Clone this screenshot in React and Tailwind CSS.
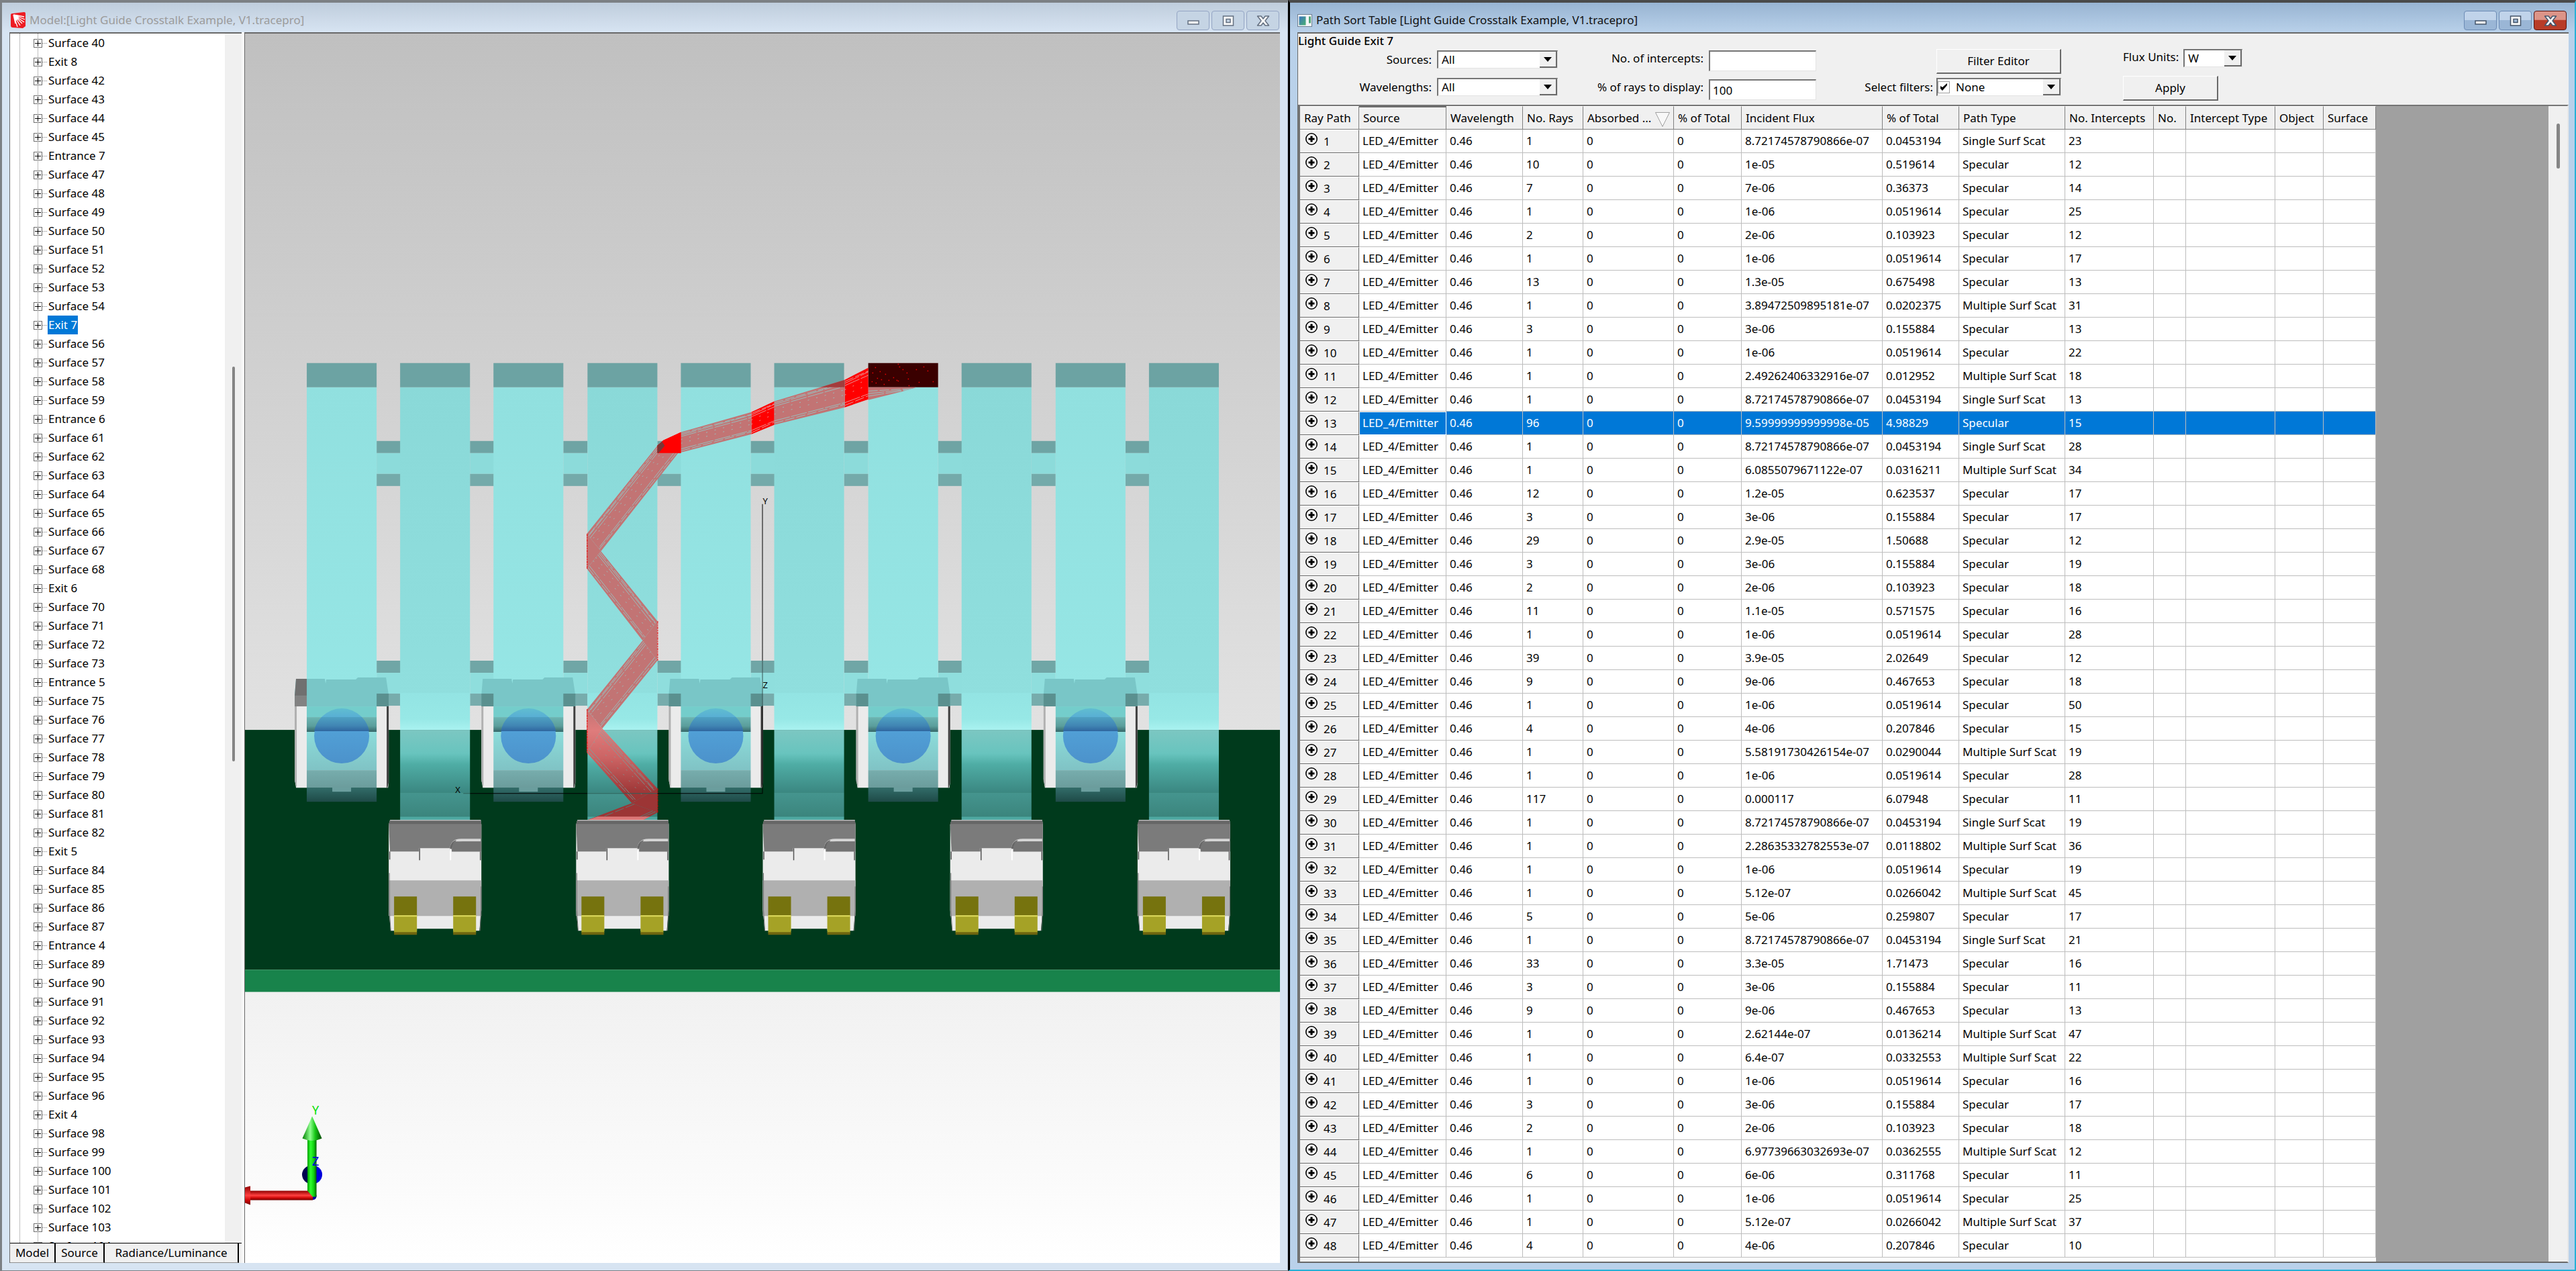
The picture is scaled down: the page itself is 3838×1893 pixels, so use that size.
import React, { useState } from 'react';

const TREE_LABELS = {
    41: 'Exit 8', 46: 'Entrance 7', 55: 'Exit 7', 60: 'Entrance 6', 69: 'Exit 6',
    74: 'Entrance 5', 83: 'Exit 5', 88: 'Entrance 4', 97: 'Exit 4',
};
const TREE = Array.from({ length: 65 }, (_, i) => TREE_LABELS[i + 40] || `Surface ${i + 40}`);

const TYPES = { s: 'Specular', 1: 'Single Surf Scat', m: 'Multiple Surf Scat' };

// rays, incident flux, % of total, path type, intercepts
const ROWS = [
    [1, '8.72174578790866e-07', '0.0453194', '1', 23],
    [10, '1e-05', '0.519614', 's', 12],
    [7, '7e-06', '0.36373', 's', 14],
    [1, '1e-06', '0.0519614', 's', 25],
    [2, '2e-06', '0.103923', 's', 12],
    [1, '1e-06', '0.0519614', 's', 17],
    [13, '1.3e-05', '0.675498', 's', 13],
    [1, '3.89472509895181e-07', '0.0202375', 'm', 31],
    [3, '3e-06', '0.155884', 's', 13],
    [1, '1e-06', '0.0519614', 's', 22],
    [1, '2.49262406332916e-07', '0.012952', 'm', 18],
    [1, '8.72174578790866e-07', '0.0453194', '1', 13],
    [96, '9.59999999999998e-05', '4.98829', 's', 15],
    [1, '8.72174578790866e-07', '0.0453194', '1', 28],
    [1, '6.0855079671122e-07', '0.0316211', 'm', 34],
    [12, '1.2e-05', '0.623537', 's', 17],
    [3, '3e-06', '0.155884', 's', 17],
    [29, '2.9e-05', '1.50688', 's', 12],
    [3, '3e-06', '0.155884', 's', 19],
    [2, '2e-06', '0.103923', 's', 18],
    [11, '1.1e-05', '0.571575', 's', 16],
    [1, '1e-06', '0.0519614', 's', 28],
    [39, '3.9e-05', '2.02649', 's', 12],
    [9, '9e-06', '0.467653', 's', 18],
    [1, '1e-06', '0.0519614', 's', 50],
    [4, '4e-06', '0.207846', 's', 15],
    [1, '5.58191730426154e-07', '0.0290044', 'm', 19],
    [1, '1e-06', '0.0519614', 's', 28],
    [117, '0.000117', '6.07948', 's', 11],
    [1, '8.72174578790866e-07', '0.0453194', '1', 19],
    [1, '2.28635332782553e-07', '0.0118802', 'm', 36],
    [1, '1e-06', '0.0519614', 's', 19],
    [1, '5.12e-07', '0.0266042', 'm', 45],
    [5, '5e-06', '0.259807', 's', 17],
    [1, '8.72174578790866e-07', '0.0453194', '1', 21],
    [33, '3.3e-05', '1.71473', 's', 16],
    [3, '3e-06', '0.155884', 's', 11],
    [9, '9e-06', '0.467653', 's', 13],
    [1, '2.62144e-07', '0.0136214', 'm', 47],
    [1, '6.4e-07', '0.0332553', 'm', 22],
    [1, '1e-06', '0.0519614', 's', 16],
    [3, '3e-06', '0.155884', 's', 17],
    [2, '2e-06', '0.103923', 's', 18],
    [1, '6.97739663032693e-07', '0.0362555', 'm', 12],
    [6, '6e-06', '0.311768', 's', 11],
    [1, '1e-06', '0.0519614', 's', 25],
    [1, '5.12e-07', '0.0266042', 'm', 37],
    [4, '4e-06', '0.207846', 's', 10],
];

const COLUMNS = [
    ['Ray Path', 'w-[88px]'],
    ['Source', 'w-[130px]'],
    ['Wavelength', 'w-[114px]'],
    ['No. Rays', 'w-[90px]'],
    ['Absorbed ...', 'w-[135px]'],
    ['% of Total', 'w-[101px]'],
    ['Incident Flux', 'w-[210px]'],
    ['% of Total', 'w-[114px]'],
    ['Path Type', 'w-[158px]'],
    ['No. Intercepts', 'w-[132px]'],
    ['No.', 'w-[48px]'],
    ['Intercept Type', 'w-[133px]'],
    ['Object', 'w-[72px]'],
    ['Surface', 'w-[78px]'],
];

function WindowButtons({ active }) {
    const base = active
        ? 'border-[#6c8bb5] bg-linear-to-b from-[#c0d3ea] from-50% to-[#9ab6d6] to-50%'
        : 'border-[#94a5c4] bg-[#c5d4e4]';
    const close = active ? 'border-[#5a1410] bg-linear-to-b from-[#dc9488] from-45% to-[#b83c28] to-50%' : base;
    const ink = active ? '#44546a' : '#636f80';
    return (
        <div className="flex gap-[3px] pt-3">
            <button aria-label="Minimize" className={`flex h-[29px] w-[49px] items-center justify-center rounded-sm border ${base}`}>
                <svg width="20" height="20" viewBox="0 0 20 20">
                    <rect x="2" y="10" width="16" height="5" fill="#f8f8f8" stroke={ink} strokeWidth="1.5" />
                </svg>
            </button>
            <button aria-label="Maximize" className={`flex h-[29px] w-[49px] items-center justify-center rounded-sm border ${base}`}>
                <svg width="20" height="20" viewBox="0 0 20 20">
                    <path d="M2.500 3h15v14h-15zM7 7.500h6v5H7z" fill="#f8f8f8" fillRule="evenodd" stroke={ink} strokeWidth="1.5" />
                </svg>
            </button>
            <button aria-label="Close" className={`flex h-[29px] w-[49px] items-center justify-center rounded-sm border ${close}`}>
                <svg width="20" height="20" viewBox="0 0 20 20">
                    <path
                        d="M1.500 3h5.500l3 4 3-4h5.500l-5.500 7 5.500 7h-5.500l-3-4-3 4H1.500L7 10z"
                        fill="#f8f8f8"
                        stroke={ink}
                        strokeWidth="1.5"
                        strokeLinejoin="round"
                    />
                </svg>
            </button>
        </div>
    );
}

function TreeNode({ label, selected, onSelect }) {
    return (
        <li className="flex h-7 items-center">
            <svg width="56" height="28" viewBox="0 0 56 28" className="shrink-0" shapeRendering="crispEdges">
                <path d="M14.500 0V28M41.500 0V28" stroke="#808080" strokeDasharray="1 1" />
                <path d="M48 14.500h7" stroke="#808080" strokeDasharray="1 1" />
                <rect x="35.500" y="8.500" width="12" height="12" fill="#fff" stroke="#707070" />
                <path d="M37 14.500h9M41.500 10v9" stroke="#000" />
            </svg>
            <button
                onClick={onSelect}
                className={`h-7 px-px text-left whitespace-nowrap ${selected ? 'bg-[#0078d7] text-white' : 'text-black'}`}
            >
                {label}
            </button>
        </li>
    );
}

function ModelTree() {
    const [selected, setSelected] = useState('Exit 7');
    const [tab, setTab] = useState('Model');
    const tabs = [['Model', 'w-[68px]'], ['Source', 'w-[73px]'], ['Radiance/Luminance', 'flex-1']];
    return (
        <div className="flex min-h-0 w-[345px] shrink-0 flex-col bg-[#f0f0f0]">
            <div className="flex min-h-0 flex-1 overflow-hidden">
                <ul className="min-w-0 flex-1 bg-white">
                    {TREE.map((label) => (
                        <TreeNode key={label} label={label} selected={label === selected} onSelect={() => setSelected(label)} />
                    ))}
                </ul>
                <div className="flex w-[25px] justify-center pt-[496px]">
                    <div className="h-[588px] w-1 rounded bg-[#858585]" />
                </div>
            </div>
            <div className="flex h-[30px] shrink-0 border-t border-black pr-1" role="tablist">
                {tabs.map(([name, width]) => (
                    <button
                        key={name}
                        role="tab"
                        aria-selected={tab === name}
                        onClick={() => setTab(name)}
                        className={`border-r-2 border-b border-r-black border-b-[#909090] text-center whitespace-nowrap ${width}`}
                    >
                        {name}
                    </button>
                ))}
            </div>
        </div>
    );
}

const BARS = [457, 596, 735, 875, 1014, 1153, 1293, 1432, 1572, 1711];
const LINE_STEPS = [0.06, 0.13, 0.21, 0.36, 0.55, 0.83, 0.93];

// Four corners: a→b is one outer edge of the bundle, d→c the other.
function RayBand({ a, b, c, d, fill, line = '#8bdad9', steps = LINE_STEPS }) {
    const mix = (p, q, t) => [p[0] + (q[0] - p[0]) * t, p[1] + (q[1] - p[1]) * t];
    return (
        <g>
            <polygon points={[a, b, c, d].map((p) => p.join()).join(' ')} fill={fill} />
            {steps.map((t, i) => {
                const p = mix(a, d, t);
                const q = mix(b, c, i % 2 ? t : t * 0.9 + 0.05);
                return (
                    <line
                        key={t}
                        x1={p[0]}
                        y1={p[1]}
                        x2={q[0]}
                        y2={q[1]}
                        stroke={line}
                        strokeWidth="0.7"
                        strokeDasharray={i === 3 || i === 4 ? '2 11' : i % 3 ? '24 2' : '14 3'}
                    />
                );
            })}
        </g>
    );
}

function RearModule({ x, first }) {
    return (
        <g transform={`translate(${x} 0)`}>
            <path d="M-18 1052H122V1165L121 1173H-16L-18 1160z" fill="#ebebeb" />
            <path d="M-18 1052h3v121l-3-10z" fill="#b0b0b0" />
            <path d="M119 1052h3v113l-2 8h-1z" fill="#3f3f3f" />
            <path
                d="M-16 1011H27L28 1018L29 1012H73L76 1009H118L122 1036V1052H-18V1035z"
                fill="#79c6c7"
            />
            {first && (
                <>
                    <path d="M-16 1011H0V1036H-18z" fill="#707070" />
                    <path d="M-18 1036H0V1052H-18z" fill="#828282" />
                </>
            )}
            {!first && <rect x="-18" y="1033" width="18" height="19" fill="#5a908f" />}
            <rect x="104" y="1033" width="18" height="19" fill="#5a908f" />
            <rect x="0" y="1052" width="104" height="16" fill="#74cdcb" />
            <rect x="0" y="1068" width="104" height="22" fill="url(#lip)" />
            <rect x="0" y="1090" width="104" height="57" fill="url(#window)" />
            <circle cx="52" cy="1096" r="41" fill="url(#emitter)" />
            <path d="M11 1089A41 41 0 0 1 22 1068H82A41 41 0 0 1 93 1089z" fill="url(#emitterLip)" />
            <rect x="0" y="1147" width="104" height="26" fill="url(#foot)" />
            <rect x="0" y="1173" width="104" height="21" fill="url(#sole)" />
            <rect x="38" y="1172" width="28" height="7" fill="#6b9e9e" />
        </g>
    );
}

function FrontModule({ x }) {
    return (
        <g transform={`translate(${x} 0)`}>
            <path d="M2 1221H137L138 1228V1355L135 1386H3L0 1355V1228z" fill="#ebebeb" />
            <path d="M2 1221H137L138 1228V1268H2L0 1228z" fill="#7b7b7b" />
            <path d="M2 1221H137L138 1227H0z" fill="#666" />
            <path d="M2 1221.500H137" stroke="#dcdcdc" />
            <path d="M45 1263H94V1281H45z" fill="#ebebeb" />
            <path d="M91 1266C91 1255 96 1249 108 1249H137V1253H110C99 1254 97 1258 94 1266z" fill="#d6d6d6" />
            <path d="M91 1266C91 1257 95 1252 101 1251C97 1255 95 1259 94 1264z" fill="#666" />
            <path d="M94 1262L97 1253H137V1268H94z" fill="#747474" />
            <path d="M46 1263v18M1.500 1268v12M136.500 1268v13" stroke="#555" strokeWidth="1.500" />
            <path d="M92 1264v17" stroke="#fff" strokeWidth="2" />
            <rect x="0" y="1311" width="138" height="53" fill="#b0b0b0" />
            <path d="M1 1300V1355L3 1386M137.500 1320V1355L136 1386" fill="none" stroke="#6d6d6d" />
            <path d="M42 1383H96V1387H42z" fill="#003a1c" />
            {[8, 96].map((px) => (
                <g key={px}>
                    <rect x={px} y="1335" width="34" height="28" fill="#76730e" />
                    <rect x={px} y="1363" width="34" height="26" fill="#a5a226" />
                    <rect x={px} y="1363" width="34" height="2" fill="#dedb5c" />
                    <rect x={px} y="1388" width="34" height="4" fill="#6e640f" />
                </g>
            ))}
        </g>
    );
}

const SPARKS = [
    [1337, 542], [1339, 546], [1344, 550], [1364, 550], [1381, 552], [1303, 547], [1310, 553], [1318, 557],
    [1306, 563], [1312, 565], [1323, 566], [1335, 566], [1352, 564], [1368, 569], [1389, 568], [1304, 570],
    [1316, 572], [1353, 574], [1375, 546], [1298, 568], [1330, 562], [1350, 555], [1299, 555], [1337, 567],
];

function LightGuideModel() {
    return (
        <svg
            viewBox="365 50 1541 1831"
            preserveAspectRatio="xMidYMid slice"
            className="h-full w-full"
            fontFamily="'Noto Sans', 'Open Sans', sans-serif"
            role="img"
            aria-label="Light guide model with traced rays"
        >
            <defs>
                <linearGradient id="sky" x2="0" y2="1">
                    <stop offset="0" stopColor="#c0c0c0" />
                    <stop offset="0.27" stopColor="#d0d0d0" />
                    <stop offset="0.56" stopColor="#e1e1e1" />
                    <stop offset="0.78" stopColor="#f1f1f1" />
                    <stop offset="1" stopColor="#ffffff" />
                </linearGradient>
                <linearGradient id="guideLight" x2="0" y2="1">
                    <stop offset="0" stopColor="#91e0df" />
                    <stop offset="1" stopColor="#96e6e5" />
                </linearGradient>
                <linearGradient id="guideDark" x2="0" y2="1">
                    <stop offset="0" stopColor="#8ad9d8" />
                    <stop offset="1" stopColor="#90dfde" />
                </linearGradient>
                <linearGradient id="glow" x2="0" y2="1">
                    <stop offset="0" stopColor="#93e4e3" />
                    <stop offset="0.7" stopColor="#97e8e6" />
                    <stop offset="1" stopColor="#a9f2f0" />
                </linearGradient>
                <linearGradient id="bend" x2="0" y2="1">
                    <stop offset="0" stopColor="#7cc7c2" />
                    <stop offset="0.38" stopColor="#68c4be" />
                    <stop offset="0.55" stopColor="#4fada5" />
                    <stop offset="1" stopColor="#3b8781" />
                </linearGradient>
                <linearGradient id="stem" x2="0" y2="1">
                    <stop offset="0" stopColor="#45958f" />
                    <stop offset="1" stopColor="#3b857d" />
                </linearGradient>
                <linearGradient id="lip" x2="0" y2="1">
                    <stop offset="0" stopColor="#6cb5b2" />
                    <stop offset="0.6" stopColor="#5b9e9c" />
                    <stop offset="1" stopColor="#356668" />
                </linearGradient>
                <linearGradient id="window" x2="0" y2="1">
                    <stop offset="0" stopColor="#8cdcda" />
                    <stop offset="1" stopColor="#80c3c5" />
                </linearGradient>
                <linearGradient id="emitter" x2="0" y2="1">
                    <stop offset="0" stopColor="#60bdd0" />
                    <stop offset="0.3" stopColor="#52a2d8" />
                    <stop offset="1" stopColor="#4c92cb" />
                </linearGradient>
                <linearGradient id="emitterLip" x2="0" y2="1">
                    <stop offset="0" stopColor="#4ea0c2" />
                    <stop offset="0.6" stopColor="#4186b4" />
                    <stop offset="1" stopColor="#2f669f" />
                </linearGradient>
                <linearGradient id="foot" x2="0" y2="1">
                    <stop offset="0" stopColor="#77adad" />
                    <stop offset="1" stopColor="#6b9c9c" />
                </linearGradient>
                <linearGradient id="sole" x2="0" y2="1">
                    <stop offset="0" stopColor="#326c69" />
                    <stop offset="1" stopColor="#1e4a47" />
                </linearGradient>
                <linearGradient id="rayFade" gradientUnits="userSpaceOnUse" x1="0" y1="1056" x2="0" y2="1200">
                    <stop offset="0" stopColor="#c27474" />
                    <stop offset="0.22" stopColor="#df7c7c" />
                    <stop offset="0.5" stopColor="#cc6464" />
                    <stop offset="0.85" stopColor="#9f3838" />
                    <stop offset="1" stopColor="#9a3434" />
                </linearGradient>
                <linearGradient id="shaftY">
                    <stop offset="0" stopColor="#00a000" />
                    <stop offset="0.35" stopColor="#30ff30" />
                    <stop offset="0.7" stopColor="#10d010" />
                    <stop offset="1" stopColor="#006000" />
                </linearGradient>
                <linearGradient id="coneY">
                    <stop offset="0" stopColor="#008000" />
                    <stop offset="0.4" stopColor="#90ff90" />
                    <stop offset="0.65" stopColor="#18c818" />
                    <stop offset="1" stopColor="#004800" />
                </linearGradient>
                <linearGradient id="shaftX" x2="0" y2="1">
                    <stop offset="0" stopColor="#900000" />
                    <stop offset="0.5" stopColor="#ff4040" />
                    <stop offset="0.75" stopColor="#d00808" />
                    <stop offset="1" stopColor="#700000" />
                </linearGradient>
            </defs>

            <rect x="365" y="50" width="1541" height="1831" fill="url(#sky)" />
            <rect x="365" y="1087" width="1541" height="357" fill="#003a1c" />
            <rect x="365" y="1444" width="1541" height="33" fill="#18834b" />

            {/* bridges between neighbouring guides */}
            {BARS.slice(0, -1).map((x) => (
                <g key={x}>
                    <rect x={x + 104} y="657" width="36" height="18" fill="#6ea4a4" />
                    <rect x={x + 104} y="675" width="36" height="31" fill="#8cdbda" />
                    <rect x={x + 104} y="706" width="36" height="18" fill="#74aaaa" />
                    <rect x={x + 104} y="984" width="36" height="18" fill="#70a6a6" />
                    <rect x={x + 104} y="1002" width="36" height="31" fill="#8fdedd" />
                    <rect x={x + 104} y="1033" width="36" height="18" fill="#77acac" />
                </g>
            ))}

            {BARS.map((x, i) => (
                <g key={x}>
                    <rect x={x} y="577" width="104" height="475" fill={i % 2 ? 'url(#guideDark)' : 'url(#guideLight)'} />
                    <rect x={x} y="541" width="104" height="36" fill={i === 6 ? '#3a0000' : '#6ca3a3'} />
                    {i % 2 === 1 && (
                        <>
                            <rect x={x} y="1032" width="104" height="55" fill="url(#glow)" />
                            <rect x={x} y="1087" width="104" height="93" fill="url(#bend)" />
                            <rect x={x} y="1180" width="104" height="36" fill="url(#stem)" />
                            <rect x={x} y="1216" width="104" height="5" fill="#4fa8a2" />
                        </>
                    )}
                </g>
            ))}
            {BARS.filter((_, i) => i % 2 === 0).map((x, i) => (
                <RearModule key={x} x={x} first={i === 0} />
            ))}

            {/* traced ray bundle */}
            <RayBand a={[1293, 577]} b={[1365, 577]} c={[1345, 583]} d={[1293, 596]} fill="#c27474" steps={[0.3, 0.5, 0.7]} />
            <RayBand a={[1258, 566]} b={[1293, 548]} c={[1293, 595]} d={[1258, 607]} fill="#f00" line="#e0d0d0" />
            <RayBand a={[1153, 598]} b={[1258, 566]} c={[1258, 607]} d={[1153, 633]} fill="#c27474" />
            <polygon points="1222,577 1258,566 1258,577" fill="#a33c3c" />
            <RayBand a={[1119, 614]} b={[1153, 598]} c={[1153, 633]} d={[1119, 647]} fill="#f00" line="#e0d0d0" />
            <RayBand a={[1014, 644]} b={[1119, 614]} c={[1119, 647]} d={[1014, 674]} fill="#c27474" />
            <polygon points="979,664 988,656 1014,644 1014,675 979,675" fill="#f00" />
            <polygon points="979,664 986,658 990,664 981,675 979,675" fill="#7c3434" />
            <RayBand a={[979, 664]} b={[874, 795]} c={[895, 821]} d={[1010, 675]} fill="#c27474" />
            <polygon points="979,664 988,656 1014,644 1014,675 979,675" fill="#f00" />
            <polygon points="979,664 986,658 990,664 981,675 979,675" fill="#7c3434" />
            <polygon points="874,795 895,821 874,847" fill="#c27474" />
            <RayBand a={[895, 821]} b={[979, 925]} c={[957, 954]} d={[874, 847]} fill="#c27474" />
            <polygon points="979,925 957,954 979,984" fill="#c27474" />
            <RayBand a={[957, 954]} b={[874, 1057]} c={[897, 1085]} d={[979, 984]} fill="#c27474" />
            <polygon points="874,1057 897,1085 874,1121" fill="url(#rayFade)" />
            <RayBand a={[897, 1085]} b={[979, 1174]} c={[941, 1196]} d={[874, 1121]} fill="url(#rayFade)" line="#66b0ac" />
            <polygon points="979,1174 941,1196 979,1210" fill="#9c3535" />
            <RayBand a={[941, 1196]} b={[875, 1221]} c={[958, 1221]} d={[979, 1210]} fill="#9c3535" line="#47908a" steps={[0.1, 0.82, 0.92]} />
            <polygon points="890,1216 968,1216 958,1221 875,1221" fill="#dc7777" />
            <path
                d="M874.500 795V847M979.500 925V984M874.500 1056V1121M979.500 1174V1210"
                stroke="#f00000"
                strokeDasharray="4 1 2 1"
            />
            {SPARKS.map(([x, y]) => (
                <rect key={`${x}-${y}`} x={x} y={y} width="1.500" height="1.500" fill="#f00000" />
            ))}

            {BARS.filter((_, i) => i % 2 === 1).map((x) => (
                <FrontModule key={x} x={x - 17} />
            ))}

            {/* model axes */}
            <path d="M1135.500 751V984M1135.500 1051V1181" stroke="#000" />
            <path d="M1135.500 984V1051" stroke="#375353" />
            <path d="M700 1181.500H875M979 1181.500H1136" stroke="#000" />
            <path d="M690 1181.500H700M875 1181.500H979" stroke="#2d5f5a" />
            <g fontSize="13" fill="#000">
                <text x="1136" y="751">Y</text>
                <text x="1136" y="1025">Z</text>
                <text x="678" y="1181">X</text>
            </g>

            {/* orientation triad */}
            <path d="M465 1735A15 14 0 0 0 465 1763z" fill="#000050" />
            <path d="M465 1735A15 14 0 0 1 465 1763z" fill="#0000dc" />
            <circle cx="466" cy="1781" r="5.500" fill="#0000a0" />
            <path d="M373 1773H458L466 1780V1787H373z" fill="url(#shaftX)" />
            <path d="M365 1768L373 1766V1794L365 1791z" fill="url(#shaftX)" />
            <path d="M458 1696H471.500V1782H466L458 1773z" fill="url(#shaftY)" />
            <path d="M465 1662L479.500 1695Q465 1702 450.500 1695z" fill="url(#coneY)" />
            <g fontSize="18">
                <text x="465" y="1660" fill="#00e000">Y</text>
                <text x="465" y="1736" fill="#0000d8">Z</text>
            </g>
        </svg>
    );
}

function Arrow() {
    return (
        <span className="pointer-events-none flex w-[26px] items-center justify-center border-r-2 border-b-2 border-[#696969] bg-[#f0f0f0]">
            <svg width="12" height="8" viewBox="0 0 12 8">
                <path d="M0 1h12L6 8z" fill="#000" />
            </svg>
        </span>
    );
}

const SUNKEN = 'border-t-2 border-l-2 border-r border-b border-t-[#757575] border-l-[#757575] border-r-[#e3e3e3] border-b-[#e3e3e3] bg-white';
const RAISED = 'border-t border-l border-r-2 border-b-2 border-t-white border-l-white border-r-[#696969] border-b-[#696969] bg-[#f0f0f0]';

function Combo({ id, options, children, className = '' }) {
    return (
        <div className={`flex h-[27px] ${SUNKEN} ${className}`}>
            {children}
            <select id={id} className="min-w-0 flex-1 appearance-none bg-white pl-[5px] leading-[22px]">
                {options.map((o) => (
                    <option key={o}>{o}</option>
                ))}
            </select>
            <Arrow />
        </div>
    );
}

function FilterBar() {
    return (
        <div className="flex h-[106px] shrink-0 flex-col bg-[#f0f0f0]">
            <h2 className="h-[21px] leading-[21px] font-medium">Light Guide Exit 7</h2>
            <div className="flex items-start">
                <div className="grid grid-cols-[199px_180px] items-center gap-x-2 gap-y-[14px] pt-1">
                    <label htmlFor="sources" className="text-right">Sources:</label>
                    <Combo id="sources" options={['All', 'LED_4/Emitter']} />
                    <label htmlFor="wavelengths" className="text-right">Wavelengths:</label>
                    <Combo id="wavelengths" options={['All', '0.46']} />
                </div>
                <div className="grid grid-cols-[217px_160px] items-start gap-x-2 gap-y-3 pt-1">
                    <label htmlFor="intercepts" className="text-right">No. of intercepts:</label>
                    <input id="intercepts" type="text" className={`h-[31px] px-1 ${SUNKEN}`} />
                    <label htmlFor="rays" className="text-right">% of rays to display:</label>
                    <input id="rays" type="text" defaultValue="100" className={`h-[31px] px-1 ${SUNKEN}`} />
                </div>
                <div className="grid grid-cols-[174px_186px] items-center gap-x-[5px] gap-y-[6px] pt-0.5">
                    <button className={`col-start-2 h-[37px] ${RAISED}`}>Filter Editor</button>
                    <label htmlFor="filters" className="text-right">Select filters:</label>
                    <Combo id="filters" options={['None']}>
                        <span className="flex items-center pr-1">
                            <input
                                type="checkbox"
                                aria-label="Use filter"
                                defaultChecked
                                className="peer size-[18px] appearance-none border border-[#a0a0a0] bg-white"
                            />
                            <svg width="18" height="18" viewBox="0 0 18 18" className="pointer-events-none -ml-[18px] hidden peer-checked:block">
                                <path d="M4 7v4l3 3 7-8V3L7 9z" fill="#000" />
                            </svg>
                        </span>
                    </Combo>
                </div>
                <div className="ml-[92px] flex flex-col items-start gap-[13px] pt-0.5">
                    <div className="flex gap-[7px]">
                        <label htmlFor="flux">Flux Units:</label>
                        <Combo id="flux" options={['W', 'lm']} className="w-[88px]" />
                    </div>
                    <button className={`h-[37px] w-[142px] ${RAISED}`}>Apply</button>
                </div>
            </div>
        </div>
    );
}

function HeaderCell({ index, label }) {
    const pressed = index === 1;
    return (
        <th
            className={`h-[35px] overflow-hidden border-r border-b border-[#808080] bg-[#f0f0f0] pl-[6px] text-left font-normal whitespace-nowrap ${
                pressed ? 'border-t-2 border-t-[#696969]' : 'border-t border-t-white'
            }`}
        >
            <span className="flex items-center justify-between">
                {label}
                {index === 4 && (
                    <svg width="22" height="24" viewBox="0 0 22 24" className="mr-[5px] mt-1">
                        <path d="M.5 1.500h21L11 22.500z" fill="#f8f8f8" stroke="#a0a0a0" />
                    </svg>
                )}
            </span>
        </th>
    );
}

function PathRow({ index, row, selected, onSelect }) {
    const [rays, flux, pct, type, hits] = row;
    const cells = ['LED_4/Emitter', '0.46', rays, 0, 0, flux, pct, TYPES[type], hits, '', '', '', ''];
    return (
        <tr onClick={onSelect} className={selected ? 'bg-[#0078d7] text-white' : 'bg-white'}>
            <th className="h-[35px] border-t border-r border-b border-t-white border-r-[#696969] border-b-[#696969] bg-[#f0f0f0] p-0 pl-2 text-left font-normal text-black">
                <span className="flex items-center gap-[9px]">
                    <svg width="18" height="18" viewBox="0 0 18 18" className="mb-2">
                        <circle cx="9" cy="9" r="8.200" fill="#fff" stroke="#000" strokeWidth="1.600" />
                        <path d="M4.500 9h9M9 4.500v9" stroke="#000" strokeWidth="3.200" />
                    </svg>
                    {index + 1}
                </span>
            </th>
            {cells.map((c, i) => (
                <td
                    key={i}
                    className={`h-[35px] border-r border-b border-[#bdbdbd] p-0 pl-[5px] whitespace-nowrap ${
                        selected && i === 0 ? 'outline outline-1 -outline-offset-1 outline-white' : ''
                    }`}
                >
                    {c}
                </td>
            ))}
        </tr>
    );
}

function PathSortTable() {
    const [selected, setSelected] = useState(12);
    return (
        <div className="flex min-h-0 flex-1 overflow-hidden border-2 border-l-[3px] border-[#757575] border-r-[#e8e8e8] border-b-[#696969]">
            <div className="min-w-0 flex-1 overflow-hidden bg-[#a0a0a0]">
                <table className="w-[1603px] table-fixed border-separate border-spacing-0">
                    <colgroup>
                        {COLUMNS.map(([, width], i) => (
                            <col key={i} className={width} />
                        ))}
                    </colgroup>
                    <thead>
                        <tr>
                            {COLUMNS.map(([label], i) => (
                                <HeaderCell key={i} index={i} label={label} />
                            ))}
                        </tr>
                    </thead>
                    <tbody>
                        {ROWS.map((row, i) => (
                            <PathRow key={i} index={i} row={row} selected={i === selected} onSelect={() => setSelected(i)} />
                        ))}
                        <tr className="bg-white">
                            <th className="h-[35px] border-r border-[#696969] bg-[#f0f0f0]" />
                            <td colSpan={13} />
                        </tr>
                    </tbody>
                </table>
            </div>
            <div className="flex w-[28px] justify-center bg-[#f0f0f0] pt-[26px]">
                <div className="h-[67px] w-[5px] rounded bg-[#858585]" />
            </div>
        </div>
    );
}

export default function App() {
    return (
        <div className="grid h-screen grid-cols-2 overflow-hidden bg-[#d7e4f2] font-['Noto_Sans','Open_Sans',sans-serif] text-[17px] leading-6 text-black">
            <section className="flex min-h-0 min-w-0 flex-col border-t-4 border-l-[3px] border-r border-b border-[#7c8084] border-r-[#a8b4c4] bg-[#d7e4f2] pr-[11px] pb-[11px] pl-[11px]">
                <header className="-mx-[11px] flex h-[44px] shrink-0 justify-between bg-linear-to-b from-[#bfcddc] to-[#d7e4f2] pr-[12px] pl-[13px]">
                    <h1 className="flex items-center gap-[6px] pt-2 text-[#9b9b9b]">
                        <svg width="22" height="24" viewBox="0 0 22 24">
                            <path d="M3 2L20 0Q22 0 22 2V21L18 24 3 23Q0 23 0 20V4Q0 2 3 2z" fill="#ed1c24" />
                            <path
                                d="M4 4L20 7M4 4L21 11M4 4L20 15M4 4L17 17M4 4L14 20M4 4L10 22M4 4L7 17"
                                stroke="#fff"
                                strokeWidth="1.300"
                            />
                            <path d="M4 4L11 5 12 10 7 13z" fill="#fff" />
                        </svg>
                        Model:[Light Guide Crosstalk Example, V1.tracepro]
                    </h1>
                    <WindowButtons />
                </header>
                <div className="flex min-h-0 flex-1">
                    <div className="flex min-h-0 border-t-2 border-l border-[#696969]">
                        <ModelTree />
                    </div>
                    <div className="w-1 bg-[#f8f8f8]" />
                    <div className="min-w-0 flex-1 overflow-hidden border-t-2 border-l-[1px] border-[#696969]">
                        <LightGuideModel />
                    </div>
                </div>
            </section>

            <section className="flex min-h-0 min-w-0 flex-col border-t-4 border-r-2 border-b-2 border-l-[3px] border-t-[#4a4a4a] border-r-[#25b0d6] border-b-[#25b0d6] border-l-black bg-[#b9d1ea] pr-[9px] pb-[10px] pl-[11px]">
                <header className="-mr-[9px] -ml-[11px] flex h-[44px] shrink-0 justify-between bg-linear-to-b from-[#98b4d2] to-[#b9d1ea] pr-[12px] pl-[11px]">
                    <h1 className="flex items-center gap-[6px] pt-2 text-[#111]">
                        <svg width="22" height="19" viewBox="0 0 22 19">
                            <rect x=".5" y=".5" width="21" height="18" fill="#f4f6f8" stroke="#6d7f92" />
                            <rect x="2.500" y="3.500" width="10" height="13" fill="url(#pane)" />
                            <rect x="17" y="3.500" width="3" height="10" fill="#4fa678" />
                            <defs>
                                <linearGradient id="pane" x2="1" y2="1">
                                    <stop offset="0" stopColor="#3c73c0" />
                                    <stop offset="1" stopColor="#48b070" />
                                </linearGradient>
                            </defs>
                        </svg>
                        Path Sort Table [Light Guide Crosstalk Example, V1.tracepro]
                    </h1>
                    <WindowButtons active />
                </header>
                <div className="flex min-h-0 flex-1 flex-col border-t-2 border-l border-t-[#696969] border-l-[#696969]">
                    <FilterBar />
                    <PathSortTable />
                </div>
            </section>
        </div>
    );
}
